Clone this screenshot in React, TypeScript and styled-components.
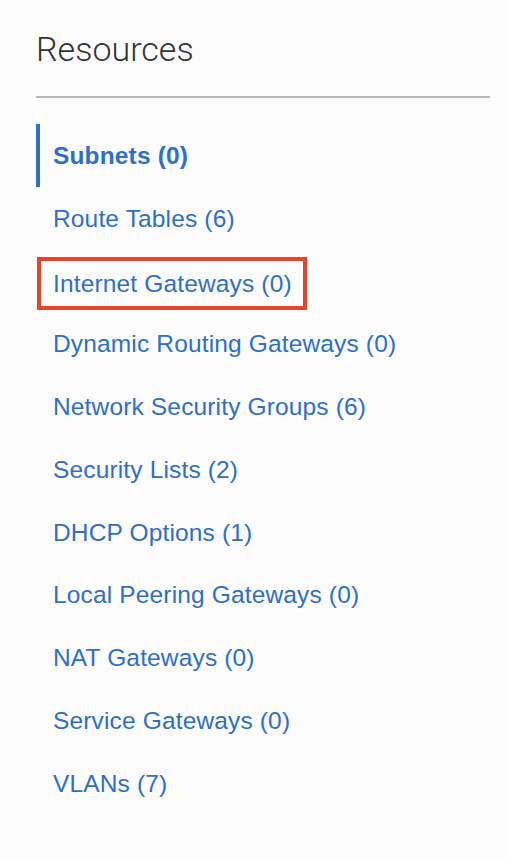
import React from "react";
import styled, { createGlobalStyle } from "styled-components";

const GlobalStyle = createGlobalStyle`
  html, body {
    margin: 0;
    padding: 0;
    background: #fcfcfc;
  }
  body {
    font-family: "Liberation Sans", Arial, sans-serif;
  }
`;

const Panel = styled.div`
  width: 454px;
  padding: 29px 0 0 36px;
  box-sizing: content-box;
`;

const Title = styled.h2`
  margin: 0;
  font-family: Roboto, "Liberation Sans", sans-serif;
  font-weight: 300;
  font-size: 34px;
  line-height: 40px;
  color: #333333;
  letter-spacing: 0;
`;

const Divider = styled.hr`
  margin: 27px 0 0 0;
  border: none;
  height: 2px;
  background: #b6b9bd;
`;

const List = styled.ul`
  list-style: none;
  margin: 26px 0 0 0;
  padding: 0;
`;

const Item = styled.li<{ $active?: boolean }>`
  height: 62.8px;
  display: flex;
  align-items: center;
  box-sizing: border-box;
  border-left: 4px solid ${(p) => (p.$active ? "#2f6fc6" : "transparent")};
  padding-left: 13px;
`;

const Link = styled.a<{ $active?: boolean }>`
  font-family: "Liberation Sans", Arial, sans-serif;
  font-size: 24.5px;
  line-height: 29px;
  letter-spacing: 0.15px;
  font-weight: ${(p) => (p.$active ? 700 : 400)};
  color: #2f6fc6;
  text-decoration: none;
  cursor: pointer;
  white-space: nowrap;
`;

const Highlight = styled.span`
  display: inline-flex;
  align-items: center;
  margin-left: -16px;
  margin-top: 5px;
  padding: 8px 11px 8px 12px;
  border: 4px solid #e9432b;
`;

type Res = { label: string; count: number; active?: boolean; marked?: boolean };

const resources: Res[] = [
  { label: "Subnets", count: 0, active: true },
  { label: "Route Tables", count: 6 },
  { label: "Internet Gateways", count: 0, marked: true },
  { label: "Dynamic Routing Gateways", count: 0 },
  { label: "Network Security Groups", count: 6 },
  { label: "Security Lists", count: 2 },
  { label: "DHCP Options", count: 1 },
  { label: "Local Peering Gateways", count: 0 },
  { label: "NAT Gateways", count: 0 },
  { label: "Service Gateways", count: 0 },
  { label: "VLANs", count: 7 },
];

export default function App() {
  return (
    <>
      <GlobalStyle />
      <Panel>
        <Title>Resources</Title>
        <Divider />
        <List>
          {resources.map((r) => {
            const link = (
              <Link $active={r.active}>
                {r.label} ({r.count})
              </Link>
            );
            return (
              <Item key={r.label} $active={r.active}>
                {r.marked ? <Highlight>{link}</Highlight> : link}
              </Item>
            );
          })}
        </List>
      </Panel>
    </>
  );
}
